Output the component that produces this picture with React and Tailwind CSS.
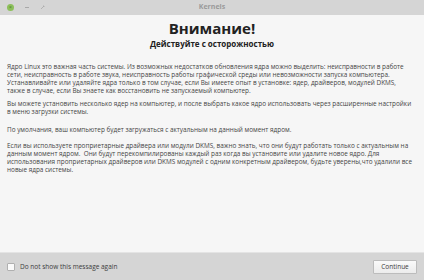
const paragraphs = [
  {
    mt: "mt-0",
    lines: [
      "Ядро Linux это важная часть системы. Из возможных недостатков обновления ядра можно выделить: неисправности в работе",
      "сети, неисправность в работе звука, неисправность работы графической среды или невозможности запуска компьютера.",
      "Устанавливайте или удаляйте ядра только в том случае, если Вы имеете опыт в установке: ядер, драйверов, модулей DKMS,",
      "также в случае, если Вы знаете как восстановить не запускаемый компьютер.",
    ],
  },
  {
    mt: "mt-[5px]",
    lines: [
      "Вы можете установить несколько ядер на компьютер, и после выбрать какое ядро использовать через расширенные настройки",
      "в меню загрузки системы.",
    ],
  },
  {
    mt: "mt-[10px]",
    lines: ["По умолчания, ваш компьютер будет загружаться с актуальным на данный момент ядром."],
  },
  {
    mt: "mt-[8px]",
    lines: [
      "Если вы используете проприетарные драйвера или модули DKMS, важно знать, что они будут работать только с актуальным на",
      "данным момент ядром.  Они будут перекомпилированы каждый раз когда вы установите или удалите новое ядро. Для",
      "использования проприетарных драйверов или DKMS модулей с одним конкретным драйвером, будьте уверены,что удалили все",
      "новые ядра системы.",
    ],
  },
];

export default function App() {
  return (
    <div className="w-[424px] h-[280px] flex flex-col bg-[#f6f6f6] overflow-hidden" style={{ fontFamily: '"Open Sans", "Noto Sans", sans-serif' }}>
      <div className="h-[15px] shrink-0 bg-[#d5d5d5] relative flex items-center">
        <div className="flex items-center gap-[9px] pl-[7px]">
          <span className="w-[7px] h-[7px] rounded-full bg-[#8cbf5b] flex items-center justify-center">
            <span className="text-[5px] leading-none text-[#5a8a30] font-bold">×</span>
          </span>
          <span className="w-[7px] h-[7px] flex items-center justify-center">
            <span className="block w-[4px] h-[1px] bg-[#a8a8a8]" />
          </span>
          <span className="w-[7px] h-[7px] flex items-center justify-center">
            <svg width="5" height="5" viewBox="0 0 5 5"><path d="M1 4 L4 1 M3 1 H4 V2" stroke="#a8a8a8" strokeWidth="0.8" fill="none" /></svg>
          </span>
        </div>
        <div className="absolute left-0 right-0 top-0 h-[15px] flex items-center justify-center text-[7px] font-bold text-[#9a9a9a]">Kernels</div>
      </div>
      <div className="flex-1 px-[7px] text-[#454545]">
        <div className="text-center text-[15px] font-bold leading-none mt-[6px] text-[#222]">Внимание!</div>
        <div className="text-center text-[8px] font-bold leading-none mt-[4px] text-[#222]">Действуйте с осторожностью</div>
        <div className="text-[6.4px] leading-[8px] mt-[15px]">
          {paragraphs.map((p, i) => (
            <p key={i} className={p.mt}>
              {p.lines.map((l, j) => (
                <span key={j} className="block whitespace-pre">{l}</span>
              ))}
            </p>
          ))}
        </div>
      </div>
      <div className="h-[28px] shrink-0 bg-[#d5d5d5] border-t border-[#e4e4e4] flex items-center justify-between pl-[7px] pr-[7px]">
        <label className="flex items-center gap-[5px] text-[6.5px] text-[#3c3c3c]">
          <span className="w-[8px] h-[8px] rounded-[1px] border border-[#b0b0b0] bg-[#fafafa]" />
          Do not show this message again
        </label>
        <button className="w-[44px] h-[14px] rounded-[1px] border border-[#bcbcbc] bg-gradient-to-b from-[#fafafa] to-[#ececec] text-[6.5px] text-[#3c3c3c]">Continue</button>
      </div>
    </div>
  );
}
